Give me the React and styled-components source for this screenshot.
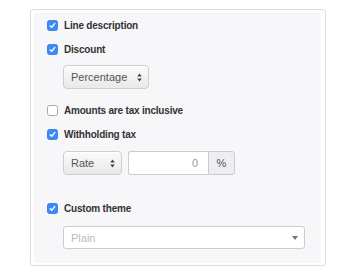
import React from "react";
import styled, { createGlobalStyle } from "styled-components";

const GlobalStyle = createGlobalStyle`
  body {
    margin: 0;
    background: #ffffff;
    font-family: "Liberation Sans", Arial, sans-serif;
  }
`;

const Frame = styled.div`
  margin: 9px 0 0 30px;
  width: 287px;
  padding: 3px 4px 2px 3px;
  border: 1px solid #dcdcdc;
  border-radius: 3px;
  background: #ffffff;
`;

const Panel = styled.div`
  background: #f7f7f9;
  padding: 4px 13px 14px 13px;
  display: flex;
  flex-direction: column;
`;

const CheckRow = styled.label`
  display: flex;
  align-items: center;
  gap: 6px;
  height: 16px;
  margin-top: ${({ $top }) => $top || 0}px;
  font-size: 10px;
  font-weight: bold;
  letter-spacing: -0.2px;
  color: #333333;
`;

const Box = styled.span`
  width: 11px;
  height: 11px;
  box-sizing: border-box;
  border-radius: 2.5px;
  display: flex;
  align-items: center;
  justify-content: center;
  background: ${({ $checked }) => ($checked ? "#3d8af7" : "#ffffff")};
  border: 1px solid ${({ $checked }) => ($checked ? "#3a84ee" : "#a9a9a9")};
`;

const Indent = styled.div`
  display: flex;
  margin-left: 16px;
  margin-top: ${({ $top }) => $top || 0}px;
`;

const MacSelect = styled.div`
  width: ${({ $w }) => $w}px;
  height: 24px;
  box-sizing: border-box;
  display: flex;
  align-items: center;
  justify-content: space-between;
  padding: 0 6px 0 7px;
  border: 1px solid #cfcfcf;
  border-radius: 4px;
  background: linear-gradient(#fbfbfb, #e9e9e9);
  box-shadow: inset 0 1px 0 #ffffff;
  font-size: 11px;
  color: #555555;
`;

const InputGroup = styled.div`
  display: flex;
  margin-left: 6px;
  height: 24px;
`;

const NumberInput = styled.div`
  width: 80px;
  box-sizing: border-box;
  border: 1px solid #cccccc;
  border-right: none;
  border-radius: 3px 0 0 3px;
  background: #ffffff;
  display: flex;
  align-items: center;
  justify-content: flex-end;
  padding-right: 10px;
  font-size: 11px;
  color: #999999;
`;

const Addon = styled.div`
  width: 27px;
  box-sizing: border-box;
  border: 1px solid #cccccc;
  border-radius: 0 3px 3px 0;
  background: #eceef1;
  display: flex;
  align-items: center;
  justify-content: center;
  font-size: 11px;
  color: #555555;
`;

const PlainSelect = styled.div`
  width: 242px;
  height: 23px;
  box-sizing: border-box;
  border: 1px solid #cccccc;
  border-radius: 3px;
  background: #ffffff;
  display: flex;
  align-items: center;
  justify-content: space-between;
  padding: 0 6px 0 7px;
  font-size: 11px;
  color: #bbbbbb;
`;

const Check = () => (
  <svg width="7" height="7" viewBox="0 0 8 8">
    <path d="M1.3 4.2 L3.2 6 L6.7 1.6" fill="none" stroke="#fff" strokeWidth="1.5" strokeLinecap="round" strokeLinejoin="round" />
  </svg>
);

const UpDown = () => (
  <svg width="5" height="9" viewBox="0 0 5 9">
    <path d="M2.5 0.5 L4.8 3.6 H0.2 Z M2.5 8.5 L4.8 5.4 H0.2 Z" fill="#444" />
  </svg>
);

const Caret = () => (
  <svg width="6" height="4" viewBox="0 0 6 4">
    <path d="M0 0 H6 L3 4 Z" fill="#777" />
  </svg>
);

const Option = ({ checked, top, children }) => (
  <CheckRow $top={top}>
    <Box $checked={checked}>{checked && <Check />}</Box>
    {children}
  </CheckRow>
);

export default function App() {
  return (
    <>
      <GlobalStyle />
      <Frame>
        <Panel>
          <Option checked>Line description</Option>
          <Option checked top={8}>Discount</Option>
          <Indent $top={8}>
            <MacSelect $w={86}>
              Percentage
              <UpDown />
            </MacSelect>
          </Indent>
          <Option top={13}>Amounts are tax inclusive</Option>
          <Option checked top={8}>Withholding tax</Option>
          <Indent $top={9}>
            <MacSelect $w={59}>
              Rate
              <UpDown />
            </MacSelect>
            <InputGroup>
              <NumberInput>0</NumberInput>
              <Addon>%</Addon>
            </InputGroup>
          </Indent>
          <Option checked top={25}>Custom theme</Option>
          <Indent $top={10}>
            <PlainSelect>
              Plain
              <Caret />
            </PlainSelect>
          </Indent>
        </Panel>
      </Frame>
    </>
  );
}
